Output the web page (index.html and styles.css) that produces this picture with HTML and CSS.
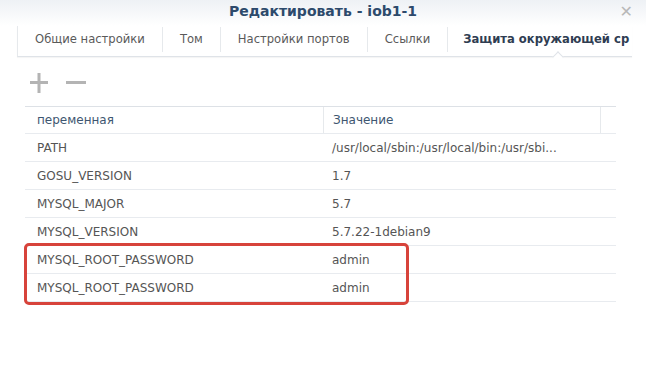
FILE: index.html
```html
<!DOCTYPE html>
<html>
<head>
	<meta charset="UTF-8">
	<title>Редактировать - iob1-1</title>
	<link rel="stylesheet" href="styles.css">
</head>
<body>
	<div class="window">
		<div class="title-bar">
			<span class="title">Редактировать - iob1-1</span>
			<span class="close">&#x2715;</span>
		</div>

		<div class="tabs">
			<span class="tab">Общие настройки</span>
			<span class="tab">Том</span>
			<span class="tab">Настройки портов</span>
			<span class="tab">Ссылки</span>
			<span class="tab active">Защита окружающей ср</span>
		</div>

		<div class="toolbar">
			<svg class="tool" width="18" height="20" viewBox="0 0 18 20">
				<path d="M0 9.5h18M9 0v20" stroke="#b4b4b4" stroke-width="3"/>
			</svg>
			<svg class="tool" width="20" height="20" viewBox="0 0 20 20">
				<path d="M0 9.5h20" stroke="#b4b4b4" stroke-width="3"/>
			</svg>
		</div>

		<div class="grid">
			<div class="row head">
				<div class="cell name">переменная</div>
				<div class="cell value">Значение</div>
				<div class="cell rest"></div>
			</div>
			<div class="row">
				<div class="cell name">PATH</div>
				<div class="cell value">/usr/local/sbin:/usr/local/bin:/usr/sbi...</div>
			</div>
			<div class="row">
				<div class="cell name">GOSU_VERSION</div>
				<div class="cell value">1.7</div>
			</div>
			<div class="row">
				<div class="cell name">MYSQL_MAJOR</div>
				<div class="cell value">5.7</div>
			</div>
			<div class="row">
				<div class="cell name">MYSQL_VERSION</div>
				<div class="cell value">5.7.22-1debian9</div>
			</div>
			<div class="row">
				<div class="cell name">MYSQL_ROOT_PASSWORD</div>
				<div class="cell value">admin</div>
			</div>
			<div class="row">
				<div class="cell name">MYSQL_ROOT_PASSWORD</div>
				<div class="cell value">admin</div>
			</div>
			<div class="highlight"></div>
		</div>
	</div>
</body>
</html>
```

FILE: styles.css
```css
* {
	margin: 0;
	padding: 0;
	box-sizing: border-box;
}
body {
	background: #fff;
	font-family: "DejaVu Sans", Verdana, sans-serif;
	font-size: 12px;
	color: #555;
}
.window {
	width: 646px;
	height: 392px;
	background: #fff;
}
.title-bar {
	height: 26px;
	display: flex;
	align-items: center;
	justify-content: center;
	position: relative;
	background: linear-gradient(#eef1f5, #fff);
}
.title {
	font-weight: bold;
	font-size: 14px;
	color: #2d4a6c;
	margin-top: -4px;
}
.close {
	position: absolute;
	right: 13px;
	top: 2px;
	font-size: 16px;
	color: #b8b8b8;
}
.tabs {
	margin-left: 17px;
	width: 615px;
	height: 31px;
	padding-bottom: 4px;
	display: flex;
	align-items: center;
	border-left: 1px solid #e6e9ec;
	border-bottom: 1px solid #dfe3e8;
	box-shadow: 0 1px 1px rgba(0, 0, 0, .04);
	white-space: nowrap;
	position: relative;
	font-size: 11.6px;
}
.tab {
	padding: 0 17px;
	line-height: 25px;
	border-right: 1px solid #e6e9ec;
	color: #5a5a5a;
}
.tab.active {
	border-right: none;
	font-weight: bold;
	color: #2f3d52;
	padding-right: 0;
	padding-left: 15px;
	position: relative;
}
/* notch under the active tab */
.tab.active::after {
	content: "";
	position: absolute;
	left: 106px;
	bottom: -9px;
	width: 7px;
	height: 7px;
	background: #fff;
	border-left: 1px solid #dfe3e8;
	border-top: 1px solid #dfe3e8;
	transform: rotate(45deg);
}
.toolbar {
	height: 49px;
	display: flex;
	align-items: center;
	gap: 18px;
	padding-left: 30px;
	padding-top: 2px;
}
.grid {
	margin-left: 25px;
	width: 591px;
	position: relative;
}
.row {
	display: flex;
	height: 28px;
	align-items: center;
	border-bottom: 1px solid #e8ebef;
}
.row.head {
	border-top: 1px solid #dde1e6;
	height: 28px;
	color: #3e5670;
}
.cell {
	height: 100%;
	display: flex;
	align-items: center;
}
.name {
	width: 298px;
	padding-left: 12px;
}
.value {
	width: 278px;
	padding-left: 9px;
}
.head .value {
	border-left: 1px solid #e6e9ec;
	border-right: 1px solid #e6e9ec;
}
.rest {
	flex: 1;
}
.highlight {
	position: absolute;
	left: -1px;
	top: 137px;
	width: 385px;
	height: 62px;
	border: 3px solid #d7433b;
	border-radius: 5px;
}
```
